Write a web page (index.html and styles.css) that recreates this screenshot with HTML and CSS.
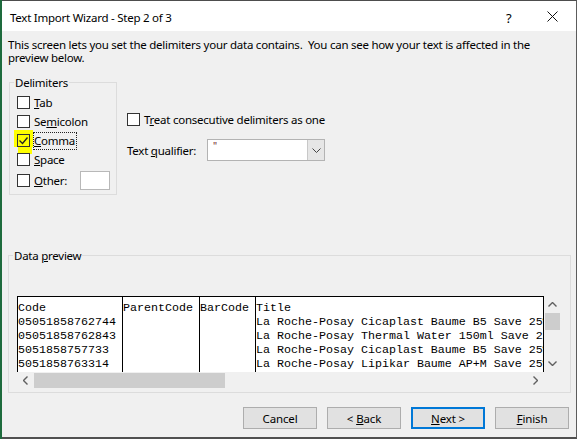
FILE: index.html
```html
<!DOCTYPE html>
<html>
<head>
	<title>Text Import Wizard - Step 2 of 3</title>
	<link rel="stylesheet" href="styles.css">
</head>
<body>
	<div class="dialog">
		<div class="titlebar">
			<span class="title">Text Import Wizard - Step 2 of 3</span>
			<span class="help">?</span>
			<span class="close">
				<svg width="11" height="11" viewBox="0 0 11 11"><path d="M0.5 0.5 L10.5 10.5 M10.5 0.5 L0.5 10.5" stroke="#111" stroke-width="1" fill="none"/></svg>
			</span>
		</div>

		<div class="content">
			<p class="intro">This screen lets you set the delimiters your data contains.&nbsp; You can see how your text is affected in the<br>preview below.</p>

			<div class="options">
				<fieldset class="group delims">
					<legend>Delimiters</legend>
					<div class="check"><span class="box"></span><span><u>T</u>ab</span></div>
					<div class="check"><span class="box"></span><span>Se<u>m</u>icolon</span></div>
					<div class="check marked">
						<span class="marker"></span>
						<span class="box checked">
							<svg width="11" height="11" viewBox="0 0 11 11"><path d="M1.5 5.5 L4.5 8.5 L9.5 2.5" stroke="#222" stroke-width="1.3" fill="none"/></svg>
						</span>
						<span class="focus"><u>C</u>omma</span>
					</div>
					<div class="check"><span class="box"></span><span><u>S</u>pace</span></div>
					<div class="check other"><span class="box"></span><span><u>O</u>ther:</span><span class="other-input"></span></div>
				</fieldset>

				<div class="side">
					<div class="check"><span class="box"></span><span>T<u>r</u>eat consecutive delimiters as one</span></div>
					<div class="qualifier">
						<span class="qualifier-label">Text <u>q</u>ualifier:</span>
						<div class="combo">
							<span class="combo-value">"</span>
							<span class="combo-btn">
								<svg width="9" height="5" viewBox="0 0 9 5"><path d="M0.5 0.5 L4.5 4.5 L8.5 0.5" stroke="#444" fill="none"/></svg>
							</span>
						</div>
					</div>
				</div>
			</div>

			<fieldset class="group preview">
				<legend>Data <u>p</u>review</legend>
				<div class="preview-grid">
					<div class="sheet">
						<div class="col col-code">
							<div>Code</div>
							<div>05051858762744</div>
							<div>05051858762843</div>
							<div>5051858757733</div>
							<div>5051858763314</div>
						</div>
						<div class="col col-parent">
							<div>ParentCode</div>
						</div>
						<div class="col col-bar">
							<div>BarCode</div>
						</div>
						<div class="col col-title">
							<div>Title</div>
							<div>La Roche-Posay Cicaplast Baume B5 Save 25% Off</div>
							<div>La Roche-Posay Thermal Water 150ml Save 25% Off</div>
							<div>La Roche-Posay Cicaplast Baume B5 Save 25% Off</div>
							<div>La Roche-Posay Lipikar Baume AP+M Save 25% Off</div>
						</div>
					</div>

					<div class="vscroll">
						<span class="arrow">
							<svg width="9" height="5" viewBox="0 0 9 5"><path d="M0.5 4.5 L4.5 0.5 L8.5 4.5" stroke="#606060" stroke-width="1.4" fill="none"/></svg>
						</span>
						<span class="vthumb"></span>
						<span class="track"></span>
						<span class="arrow">
							<svg width="9" height="5" viewBox="0 0 9 5"><path d="M0.5 0.5 L4.5 4.5 L8.5 0.5" stroke="#606060" stroke-width="1.4" fill="none"/></svg>
						</span>
					</div>

					<div class="hscroll">
						<span class="arrow">
							<svg width="5" height="9" viewBox="0 0 5 9"><path d="M4.5 0.5 L0.5 4.5 L4.5 8.5" stroke="#606060" stroke-width="1.4" fill="none"/></svg>
						</span>
						<span class="hthumb"></span>
						<span class="track"></span>
						<span class="arrow">
							<svg width="5" height="9" viewBox="0 0 5 9"><path d="M0.5 0.5 L4.5 4.5 L0.5 8.5" stroke="#606060" stroke-width="1.4" fill="none"/></svg>
						</span>
					</div>
					<div class="corner"></div>
				</div>
			</fieldset>

			<div class="buttons">
				<button>Cancel</button>
				<button>&lt; <u>B</u>ack</button>
				<button class="default"><u>N</u>ext &gt;</button>
				<button><u>F</u>inish</button>
			</div>
		</div>
	</div>
</body>
</html>
```

FILE: styles.css
```css
body {
	margin: 0;
	width: 577px;
	height: 439px;
	overflow: hidden;
	background-color: #1e6b3d;
	font-family: "Noto Sans", sans-serif;
	font-size: 11.5px;
	letter-spacing: -0.25px;
	color: #000;
}

.dialog {
	margin-left: 2px;
	width: 575px;
	height: 439px;
	box-sizing: border-box;
	border-top: 1px solid #4d4d4d;
	border-right: 1px solid #5c5c5c;
	border-bottom: 2px solid #505050;
	background-color: #f0f0f0;
	display: flex;
	flex-direction: column;
}

/* title bar */

.titlebar {
	height: 30px;
	flex: none;
	box-sizing: border-box;
	background-color: #fff;
	display: flex;
	align-items: center;
	padding: 3px 0 0 8px;
}

.title {
	flex: 1;
	line-height: 15px;
}

.help {
	font-size: 13px;
	width: 20px;
	margin-right: 21px;
}

.close {
	width: 11px;
	height: 11px;
	margin-right: 18px;
	margin-bottom: 2px;
}

.close svg {
	display: block;
}

/* body */

.content {
	flex: 1;
	padding: 7px 7px 0 6px;
}

.intro {
	margin: 0;
	line-height: 13px;
}

.options {
	display: flex;
	align-items: flex-start;
	margin-top: 11px;
}

.group {
	margin: 0;
	min-width: 0;
	border: 1px solid #dcdcdc;
	box-sizing: border-box;
}

.group legend {
	padding: 0 1px;
	line-height: 15px;
}

.delims {
	margin-left: 1px;
	width: 108px;
	padding: 3px 0 3px 4px;
}

.check {
	display: flex;
	align-items: center;
	height: 19px;
	margin-left: 3px;
	position: relative;
}

.box {
	width: 13px;
	height: 13px;
	box-sizing: border-box;
	border: 1px solid #333;
	background-color: #fff;
	margin-right: 4px;
	flex: none;
	position: relative;
}

.box.checked {
	background-color: transparent;
}

.box svg {
	display: block;
}

/* highlighter stroke over the comma option */
.marker {
	position: absolute;
	left: -3px;
	top: -1px;
	width: 19px;
	height: 17px;
	background-color: #ffff00;
}

.marker::after {
	content: "";
	position: absolute;
	left: 4px;
	top: 17px;
	width: 14px;
	height: 7px;
	background-color: #ffff00;
}

.focus {
	border: 1px dotted #222;
	padding: 0 1px 1px 0;
	margin-left: -1px;
	line-height: 15px;
	position: relative;
}

.check.other {
	height: 21px;
	margin-top: 1px;
}

.other-input {
	margin-left: auto;
	margin-right: 6px;
	width: 30px;
	height: 19px;
	box-sizing: border-box;
	border: 1px solid #b8b8b8;
	background-color: #fff;
}

.side {
	margin-left: 10px;
	padding-top: 35px;
}

.side .check {
	margin-left: 0;
}

.qualifier {
	display: flex;
	align-items: center;
	margin-top: 10px;
}

.qualifier-label {
	width: 80px;
}

.combo {
	width: 118px;
	height: 22px;
	box-sizing: border-box;
	border: 1px solid #b3b3b3;
	background-color: #fff;
	display: flex;
}

.combo-value {
	flex: 1;
	padding-left: 5px;
	font-size: 10px;
	line-height: 12px;
	color: #6b2323;
}

.combo-btn {
	width: 16px;
	background-color: #e6e6e6;
	border-left: 1px solid #c8c8c8;
	display: flex;
	align-items: center;
	justify-content: center;
}

/* data preview */

.preview {
	width: 563px;
	margin-top: 53px;
	padding: 33px 0 3px 4px;
}

.preview-grid {
	margin-left: 4px;
	display: grid;
	grid-template-columns: 527px 17px;
	grid-template-rows: 76px 17px;
}

.sheet {
	background-color: #fff;
	border: 1px solid #000;
	border-bottom: none;
	display: flex;
	overflow: hidden;
	font-family: "Liberation Mono", monospace;
	font-size: 11.67px;
	letter-spacing: 0;
	line-height: 14px;
}

.col {
	padding-top: 4px;
	white-space: nowrap;
	flex: none;
}

.col + .col {
	border-left: 1px solid #000;
}

.col-code {
	width: 104px;
}

.col-parent {
	width: 76px;
}

.col-bar {
	width: 55px;
}

.col-title {
	flex: 1;
	overflow: hidden;
}

.vscroll {
	display: flex;
	flex-direction: column;
}

.vscroll .arrow {
	height: 17px;
	display: flex;
	align-items: center;
	justify-content: center;
}

.vthumb {
	height: 17px;
	margin: 0 1px;
	background-color: #cdcdcd;
}

.track {
	flex: 1;
}

.hscroll {
	display: flex;
}

.hscroll .arrow {
	width: 17px;
	display: flex;
	align-items: center;
	justify-content: center;
}

.hthumb {
	width: 191px;
	margin: 1px 0;
	background-color: #cdcdcd;
}

/* buttons */

.buttons {
	display: flex;
	justify-content: flex-end;
	gap: 10px;
	margin-top: 14px;
}

button {
	width: 74px;
	height: 22px;
	padding: 0;
	box-sizing: border-box;
	border: 1px solid #adadad;
	background-color: #e1e1e1;
	font-family: "Noto Sans", sans-serif;
	font-size: 11.5px;
	letter-spacing: -0.15px;
	color: #000;
}

button.default {
	border: 2px solid #0078d7;
}
```
